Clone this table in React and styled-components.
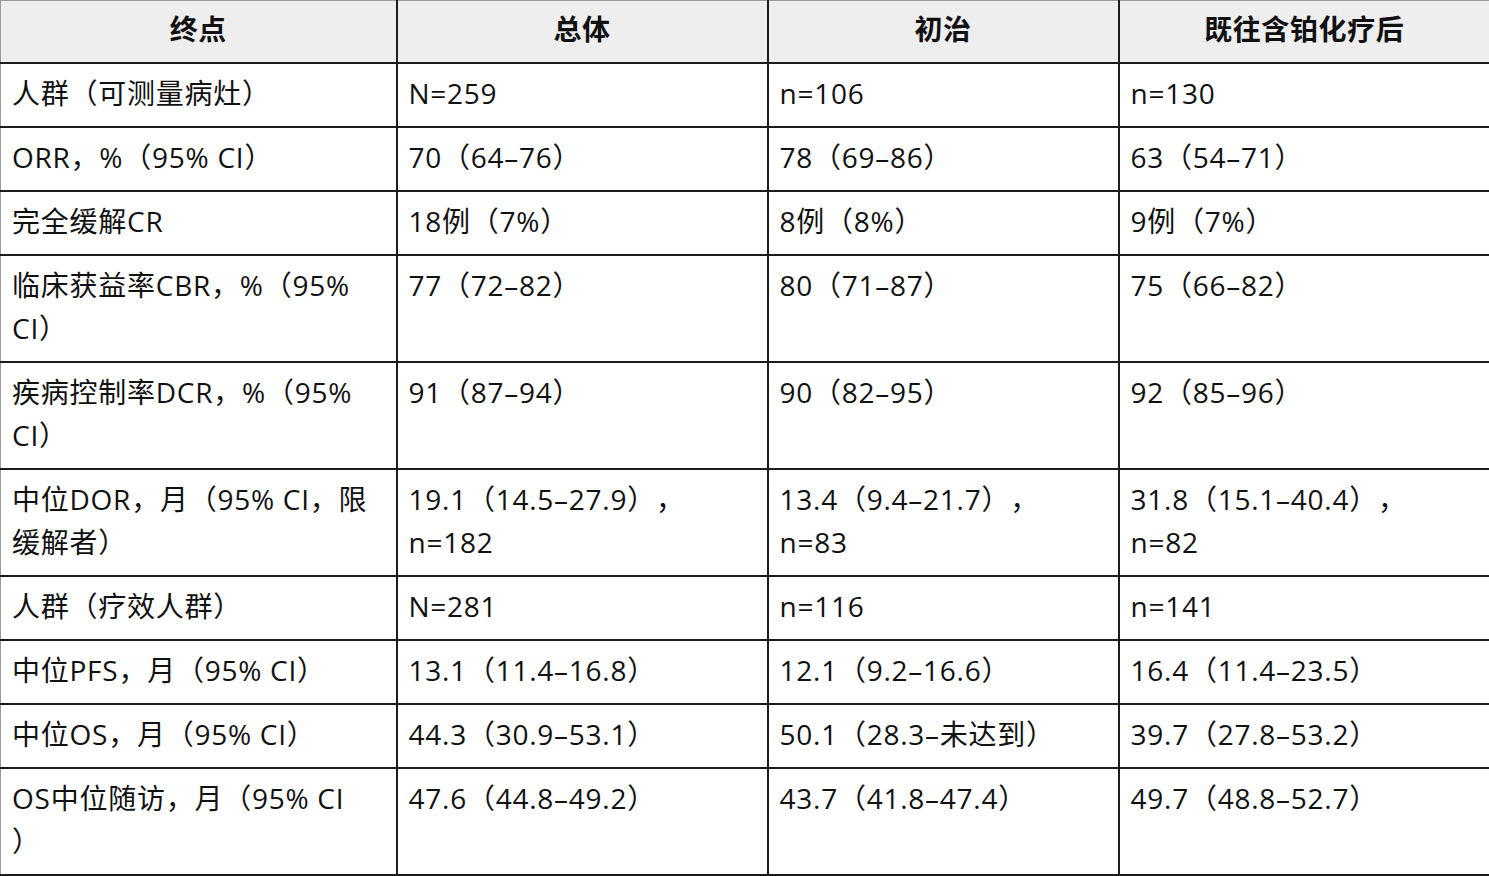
import React from "react";
import styled, { createGlobalStyle } from "styled-components";

const Global = createGlobalStyle`
  html, body { margin: 0; padding: 0; background: #ffffff; }
  body { font-family: "Open Sans", "Noto Sans CJK SC", sans-serif; color: #111; }
`;

const Table = styled.table`
  width: 1489px;
  border-collapse: collapse;
  table-layout: fixed;
  font-family: "Open Sans", "Noto Sans CJK SC", sans-serif;
  font-size: 28px;
  letter-spacing: 0.75px;
  line-height: 43px;
  text-spacing-trim: space-all;
  color: #111;
`;

const Col = styled.col`
  width: ${(p) => p.$w}px;
`;

const HeadCell = styled.th`
  background: #eeeeee;
  border: 2px solid #1c1c1c;
  border-top: 1px solid #9a9a9a;
  padding: 6px 11px 12px;
  font-family: "Noto Sans CJK SC", sans-serif;
  font-weight: 700;
  letter-spacing: 0.6px;
  text-align: center;
  vertical-align: middle;
  &:first-child { border-left: 1px solid #9a9a9a; }
  &:last-child { border-right: 1px solid #9a9a9a; }
`;

const Cell = styled.td`
  border: 2px solid #1c1c1c;
  padding: 8px 11px 11px;
  text-align: left;
  vertical-align: top;
  white-space: nowrap;
  &:first-child { border-left: 1px solid #9a9a9a; }
  &:last-child { border-right: 1px solid #9a9a9a; }
`;

const headers = ["终点", "总体", "初治", "既往含铂化疗后"];

const rows = [
  [["人群（可测量病灶）"], ["N=259"], ["n=106"], ["n=130"]],
  [["ORR，%（95% CI）"], ["70（64–76）"], ["78（69–86）"], ["63（54–71）"]],
  [["完全缓解CR"], ["18例（7%）"], ["8例（8%）"], ["9例（7%）"]],
  [["临床获益率CBR，%（95%", "CI）"], ["77（72–82）"], ["80（71–87）"], ["75（66–82）"]],
  [["疾病控制率DCR，%（95%", "CI）"], ["91（87–94）"], ["90（82–95）"], ["92（85–96）"]],
  [
    ["中位DOR，月（95% CI，限", "缓解者）"],
    ["19.1（14.5–27.9），", "n=182"],
    ["13.4（9.4–21.7），", "n=83"],
    ["31.8（15.1–40.4），", "n=82"],
  ],
  [["人群（疗效人群）"], ["N=281"], ["n=116"], ["n=141"]],
  [["中位PFS，月（95% CI）"], ["13.1（11.4–16.8）"], ["12.1（9.2–16.6）"], ["16.4（11.4–23.5）"]],
  [["中位OS，月（95% CI）"], ["44.3（30.9–53.1）"], ["50.1（28.3–未达到）"], ["39.7（27.8–53.2）"]],
  [["OS中位随访，月（95% CI", "）"], ["47.6（44.8–49.2）"], ["43.7（41.8–47.4）"], ["49.7（48.8–52.7）"]],
];

const widths = [396, 371, 351, 371];

export default function App() {
  return (
    <>
      <Global />
      <Table>
        <colgroup>
          {widths.map((w, i) => (
            <Col key={i} $w={w} />
          ))}
        </colgroup>
        <thead>
          <tr>
            {headers.map((h) => (
              <HeadCell key={h}>{h}</HeadCell>
            ))}
          </tr>
        </thead>
        <tbody>
          {rows.map((r, ri) => (
            <tr key={ri}>
              {r.map((lines, ci) => (
                <Cell key={ci}>
                  {lines.map((l, li) => (
                    <React.Fragment key={li}>
                      {li > 0 && <br />}
                      {l}
                    </React.Fragment>
                  ))}
                </Cell>
              ))}
            </tr>
          ))}
        </tbody>
      </Table>
    </>
  );
}
